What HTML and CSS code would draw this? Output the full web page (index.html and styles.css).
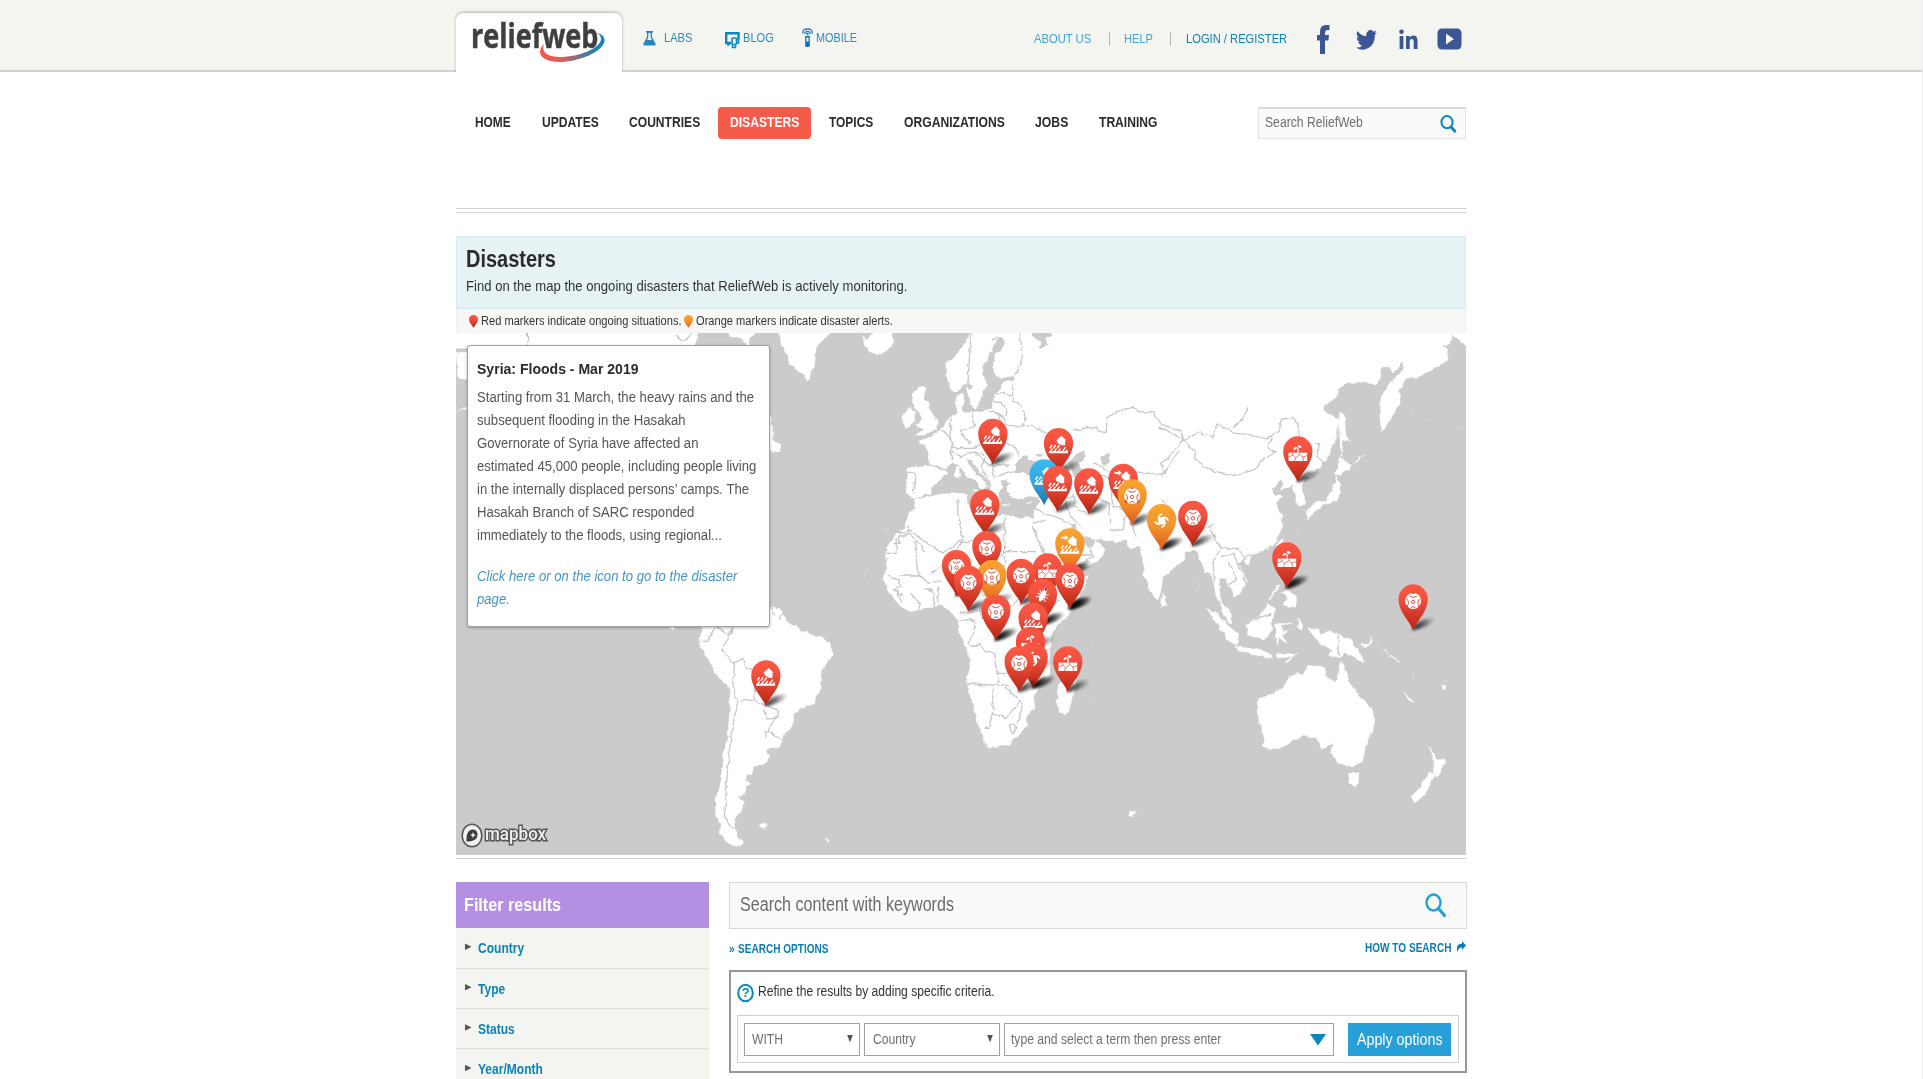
FILE: index.html
```html
<!DOCTYPE html>
<html lang="en">
<head>
<meta charset="utf-8">
<title>Disasters | ReliefWeb</title>
<link rel="stylesheet" href="styles.css">
</head>
<body>
<header class="top">
  <div class="wrap top-row">
    <a class="logo">
      <span class="logo-text t">reliefweb</span>
      <svg class="logo-swoosh" viewBox="0 0 68 32" width="68" height="32">
        <defs><linearGradient id="swoosh"><stop offset="0" stop-color="#f2594a"/><stop offset=".35" stop-color="#d9605c"/><stop offset=".75" stop-color="#3f79a8"/><stop offset="1" stop-color="#0988bf"/></linearGradient></defs>
        <path fill="url(#swoosh)" d="M6 12C3 20 9 25 22 25C41 25 63 16 63 7C63 4 61 2 59 1C64 2 67 5 66.500 9C65 20 40 30 22 30C6 30-4 22 6 12Z"/>
      </svg>
    </a>
    <nav class="tools">
      <a class="tool labs"><svg width="13" height="15" viewBox="0 0 13 15"><path fill="#2a86b8" d="M3 0h7v1.500H9v4.500l3.500 6.500q.8 2-1.500 2H2q-2.300 0-1.500-2L4 6V1.500H3zM5.300 2v4.500L4 9h5L7.700 6.500V2z"/></svg><span class="t">LABS</span></a>
      <a class="tool blog"><svg width="15" height="17" viewBox="0 0 15 17"><path fill="none" stroke="#0988bf" stroke-width="2.400" d="M6 11H3.500v2.500L3 11H1.200V1.200h12.300v7"/><rect x="7" y="6" width="4.500" height="6.500" rx="1.200" fill="#f4f4f0" stroke="#0988bf" stroke-width="1.600"/><path fill="none" stroke="#0988bf" stroke-width="1.500" d="M13.500 8v3H12M7.500 12.500v3h3v-3"/></svg><span class="t">BLOG</span></a>
      <a class="tool mobile"><svg width="11" height="19" viewBox="0 0 11 19"><path fill="none" stroke="#2a7fc0" stroke-width="1.400" d="M1 5.500Q0 1 5.500 1T10 5.500M3 6Q2.500 3.500 5.500 3.500T8 6"/><path fill="#0b6cb8" d="M3.200 8h4.600v10q0 1-2.300 1t-2.300-1z"/><path fill="#f4f4f0" d="M4.400 9.500h2.200v4H4.400z"/><circle cx="5.500" cy="6" r="1.200" fill="#2a7fc0"/></svg><span class="t">MOBILE</span></a>
    </nav>
    <nav class="user">
      <a class="u about"><span class="t">ABOUT US</span></a>
      <a class="u help"><span class="t">HELP</span></a>
      <a class="u login"><span class="t">LOGIN / REGISTER</span></a>
    </nav>
    <div class="social">
      <svg width="13" height="29" viewBox="0 0 13 29"><path fill="#3b5595" d="M3 29V15.500H0V10h3V7q0-7 6-7h3.500v5H10Q8 5 8 7.500V10h4l-.6 5.500H8V29z"/></svg>
      <svg width="21" height="20" viewBox="0 0 24 20" preserveAspectRatio="none"><path fill="#3b5595" d="M24 2.400a10 10 0 0 1-2.800.8A5 5 0 0 0 23.300.500a10 10 0 0 1-3.100 1.200A4.900 4.900 0 0 0 11.800 6.200 14 14 0 0 1 1.700 1a4.900 4.900 0 0 0 1.500 6.600 4.900 4.900 0 0 1-2.200-.6 4.900 4.900 0 0 0 3.900 4.900 5 5 0 0 1-2.200.1 4.900 4.900 0 0 0 4.600 3.400A9.900 9.900 0 0 1 0 17.500 14 14 0 0 0 21.500 5z"/></svg>
      <svg width="19" height="20" viewBox="0 0 19 20"><path fill="#3b5595" d="M.6 7h3.800v13H.6zM7 7h3.600v1.800Q12 6.600 14.400 6.600 18.500 6.600 18.500 12v8h-3.800v-7.200q0-2.800-2-2.800-2 0-2 2.800V20H7z"/><circle cx="2.500" cy="2.800" r="2.300" fill="#3b5595"/></svg>
      <svg width="25" height="22" viewBox="0 0 25 22"><rect x=".5" y=".5" width="24" height="21" rx="4.500" fill="#3b5595"/><path fill="#f4f4f0" d="M9 5.500v11l8-5.500z"/></svg>
    </div>
  </div>
</header>

<div class="wrap">
  <div class="mainbar">
    <nav class="menu">
      <a class="n1"><span class="t">HOME</span></a><a class="n2"><span class="t">UPDATES</span></a><a class="n3"><span class="t">COUNTRIES</span></a><a class="n4 active"><span class="t">DISASTERS</span></a><a class="n5"><span class="t">TOPICS</span></a><a class="n6"><span class="t">ORGANIZATIONS</span></a><a class="n7"><span class="t">JOBS</span></a><a class="n8"><span class="t">TRAINING</span></a>
    </nav>
    <div class="site-search"><span class="t">Search ReliefWeb</span><svg width="17" height="18" viewBox="0 0 17 18"><ellipse cx="7" cy="7.200" rx="5.600" ry="6.100" fill="none" stroke="#0988bf" stroke-width="2"/><path stroke="#0988bf" stroke-width="2.800" stroke-linecap="round" d="M11.300 12.300l3.600 3.900"/></svg></div>
  </div>
  <div class="rule"></div>

  <section class="banner">
    <h1><span class="t">Disasters</span></h1>
    <p><span class="t">Find on the map the ongoing disasters that ReliefWeb is actively monitoring.</span></p>
  </section>
  <div class="legend">
    <svg width="9" height="13" viewBox="-44 0 88 138" preserveAspectRatio="none"><use href="#drop" fill="url(#red)"/></svg><span class="t l1">Red markers indicate ongoing situations.</span>
    <svg width="9" height="13" viewBox="-44 0 88 138" preserveAspectRatio="none"><use href="#drop" fill="url(#orange)"/></svg><span class="t l2">Orange markers indicate disaster alerts.</span>
  </div>

  <div class="map">
    <svg class="world" width="1010" height="522" viewBox="456.500 333 1010 522">
      <defs>
        <linearGradient id="red" x2="0" y2="1"><stop offset="0" stop-color="#fb5845"/><stop offset=".3" stop-color="#f25240"/><stop offset=".7" stop-color="#d13624"/><stop offset="1" stop-color="#b32412"/></linearGradient>
        <linearGradient id="orange" x2="0" y2="1"><stop offset="0" stop-color="#fba531"/><stop offset=".5" stop-color="#f2922c"/><stop offset="1" stop-color="#e0581a"/></linearGradient>
        <linearGradient id="blue" x2="0" y2="1"><stop offset="0" stop-color="#3dbbf0"/><stop offset=".5" stop-color="#35a5dc"/><stop offset="1" stop-color="#1576b0"/></linearGradient>
        <linearGradient id="fade"><stop offset="0" stop-color="#000" stop-opacity=".9"/><stop offset=".5" stop-color="#000" stop-opacity=".5"/><stop offset="1" stop-color="#000" stop-opacity="0"/></linearGradient>
        <filter id="rough" x="0" y="0" width="1" height="1"><feTurbulence type="fractalNoise" baseFrequency=".14" numOctaves="2" seed="4"/><feDisplacementMap in="SourceGraphic" scale="5" xChannelSelector="R" yChannelSelector="G"/></filter>
        <filter id="soft" x="-.3" y="-.5" width="1.600" height="2"><feGaussianBlur stdDeviation="5"/></filter>
        <path id="drop" d="M0 138C-9 112-44 84-44 45A44 45 0 0 1 44 45C44 84 9 112 0 138Z"/>
        <path id="shade" d="M-4 138C4 118 22 104 58 102Q76 104 54 118Q26 134-4 138Z" fill="url(#fade)" filter="url(#soft)"/>
        <g id="flood"><path fill="#fff" d="M-4 44V38h-4L9 23l14 14h-3v15H9zM-29 70h57v6h-57z"/><path stroke="#fff" stroke-width="4.500" d="M-26 61l7-10M-15 61l7-10M-4 61l7-10M-27 74l9-12M-15 74l9-12M-3 74l9-12M9 74l12-16M21 74l5-8"/></g>
        <g id="flash"><use href="#flood"/><path fill="#fff" d="M-26 25h12v-5l10 8-10 8v-5h-12z"/></g>
        <g id="bio"><circle cy="50" r="24" fill="#fff"/><g fill="none" stroke="#e0503f" stroke-width="3"><circle cy="53" r="5"/><path d="M-11 35Q0 44 11 35M-15 61Q-11 50-20 43M15 61Q11 50 20 43M-7 70Q0 62 7 70"/></g><path fill="#e0503f" d="M-6 25q6 8 12 0zM-25 66l10-5-1 13zM25 66l-10-5 1 13z"/></g>
        <g id="drought"><path fill="#fff" d="M-28 49h56v25h-56z"/><path fill="none" stroke="#e0503f" stroke-width="2.200" d="M-28 62l14-6 8 8 12-10 8 8 14-4M-14 56l-4-6M-6 64l-4 10M14 62l4 12M6 54l-3-5"/><path fill="none" stroke="#fff" stroke-width="3.500" d="M0 50q4-8-1-16"/><path fill="#fff" d="M-13 41q1-11 11-9l-3 7zM-1 29q7-7 13 3l-7 4z"/></g>
        <g id="cyclone"><circle cy="50" r="11" fill="#fff"/><path fill="none" stroke="#fff" stroke-width="5" d="M-9 45Q-10 34 2 30M4 41Q16 38 20 50M10 53Q12 65-1 70M-3 60Q-15 62-20 52"/></g>
        <g id="locust" transform="rotate(28 0 50)"><ellipse cy="50" rx="8" ry="19" fill="#fff"/><path stroke="#fff" stroke-width="2.800" d="M-16 38l32 24M-16 62l32-24M-17 50h34M-5 28l4 10 6-10"/></g>
      </defs>
      <g filter="url(#rough)">
      <rect x="456" y="333" width="1012" height="523" fill="#cbcbcb"/>
      <g class="land" transform="translate(860 330) scale(.33333)">
        <path d="M335 0L322 35 300 62 262 98 262 140 275 180 290 185 312 165 322 160 328 195 335 225 345 237 358 225 360 200 375 178 385 162 372 140 370 105 388 75 405 45 415 22 430 18 437 38 425 60 408 72 402 95 403 130 422 145 466 137 466 150 430 155 420 175 403 195 402 220 395 240 375 240 345 247 318 248 308 235 314 200 308 188 290 205 290 235 295 250 275 262 262 272 250 290 235 306 215 320 205 325 180 330 180 342 200 350 207 370 208 405 190 413 145 410 140 425 145 440 140 470 140 490 150 497 165 507 185 497 215 490 222 465 245 445 262 432 262 412 278 400 300 405 320 435 350 455 366 476 382 474 376 456 350 430 325 400 322 388 335 390 352 415 375 440 392 462 390 490 405 512 425 510 415 490 430 470 422 455 440 445 448 460 442 478 450 500 475 508 505 500 535 505 540 515 525 540 520 565 520 590 530 600 535 625 555 660 575 700 585 722 605 732 650 720 690 705 720 690 738 660 722 640 708 632 700 655 688 652 660 630 640 605 628 582 645 585 668 618 700 628 740 632 770 635 800 632 815 655 838 650 848 680 855 740 875 790 893 810 905 785 910 740 930 725 975 685 980 668 1005 660 1015 670 1025 695 1035 730 1055 730 1065 770 1070 800 1085 820 1090 850 1105 875 1117 880 1110 840 1085 815 1080 780 1080 745 1100 745 1105 770 1120 785 1122 803 1145 785 1162 760 1155 730 1138 700 1155 678 1175 672 1225 658 1245 640 1265 600 1268 560 1248 520 1272 497 1248 495 1236 475 1265 452 1275 465 1262 482 1300 463 1310 500 1315 528 1335 520 1335 495 1323 470 1340 440 1370 420 1400 390 1430 330 1440 265 1405 252 1390 238 1425 205 1445 170 1465 158 1520 155 1550 165 1562 145 1570 115 1590 110 1600 130 1635 93 1628 120 1590 160 1565 200 1560 240 1565 305 1582 290 1600 255 1625 215 1618 185 1640 145 1685 140 1730 110 1765 92 1762 55 1748 48 1772 38 1778 10 1790 25 1822 48 1830 48V0H575L578 15 560 30 565 45 540 55 545 35 520 25V0Z"/>
        <path d="M163 510L200 502 240 492 310 490 325 497 318 520 345 545 380 572 410 560 435 555 470 563 520 563 515 590 530 625 545 660 570 690 585 720 610 748 682 738 675 770 630 850 590 890 572 930 570 985 575 1030 540 1075 522 1100 527 1138 498 1160 502 1185 474 1220 445 1245 391 1256 377 1245 373 1220 356 1185 344 1130 320 1060 332 1010 326 960 297 910 300 870 270 845 250 825 225 830 180 840 155 848 120 825 90 790 70 745 80 720 78 670 100 620 140 590 140 560 170 530ZM600 1062L592 1110 600 1143 612 1152 628 1145 636 1110 647 1070 650 1010 640 1020 625 1045Z"/>
        <path d="M178 170L200 175 192 200 210 230 220 260 234 275 228 300 170 320 190 300 172 285 190 265 172 240 158 215 163 185ZM150 235L166 245 165 280 135 297 130 260ZM10 15L20 30 40 9 95 9 103 35 85 65 55 75 30 65 14 45ZM288 410h14v20l-5 15-10-5zM365 478l-25-2 18 14zM425 522l28 3-25 2zM500 520l18-5-10 10zM908 790l14 35-16 5zM240 465l15-8"/>
        <path d="M1440 250L1455 250 1458 310 1470 335 1450 330 1447 380 1441 340ZM1440 385L1475 405 1470 418 1445 435 1425 437 1435 405ZM1430 440L1444 460 1436 512 1400 523 1370 540 1345 570 1340 545 1365 515 1398 515 1420 480ZM1475 402l40-28-20 20zM1265 632l6 4-10 18-8-10zM1155 680L1175 678 1168 705 1155 700ZM1265 785L1285 780 1310 800 1305 832 1270 825 1285 810ZM1228 810l26-45 4 3-27 42zM1158 880L1200 860 1225 822 1247 835 1240 865 1235 905 1210 930 1165 915ZM1042 835L1065 845 1100 880 1137 915 1135 945 1115 940 1080 895ZM1130 948L1190 955 1230 970 1240 985 1170 972 1135 962ZM1250 973h62l-10 8-50 3zM1275 997l22-15-8 12zM1248 885L1300 878 1268 890 1268 905 1282 900 1272 915 1282 942 1260 920 1255 943 1247 920ZM1320 865l8 15-6 22-5-10zM1343 893L1375 900 1380 915 1410 905 1440 915 1475 930 1490 955 1510 985 1515 998 1475 975 1450 965 1445 983 1405 975 1415 960 1380 940 1360 915ZM1500 945l30-5 5-22 3 20-18 15zM1555 945l64 50-5 1-30-28zM1660 1035l6 18M1633 1090l28 24v4l-22-17zM1746 1065h12v10h-12zM1655 232l4 10M1748 1056l23-6"/>
        <path d="M1200 1110L1270 1075 1280 1050 1310 1030 1330 1035 1345 1005 1400 1015 1392 1035 1430 1062 1440 1020 1446 996 1460 1030 1475 1070 1510 1105 1540 1145 1544 1185 1518 1250 1509 1295 1482 1308 1435 1300 1417 1270 1422 1235 1388 1255 1370 1225 1340 1216 1293 1235 1281 1247 1228 1260 1210 1245 1216 1230 1198 1170 1194 1140Z"/>
        <path d="M1706 270l5 4M1748 290l4 3M1798 290l4 3M1320 600l-5 18M1336 570l-3 8M1020 755l-3 20M78 598l6 4M1092 642M692 936l6 4M20 728l-6 10"/>
        <g class="water">
          <path d="M468 430L470 400 490 380 505 378 505 390 530 395 560 420 590 440 540 445 500 432ZM525 375l30-8-10 14zM650 372L678 360 678 380 658 395 662 420 682 440 688 485 665 500 650 470 640 430 628 400ZM722 382L748 368 750 398 730 408ZM1162 226L1168 240 1150 270 1130 292 1114 292 1140 275 1158 250ZM322 165l18 0-8 15zM430 460l28-2-14 6z"/>
        </g>
        <g class="lines">
          <path d="M335 9L330 80 325 165M412 20L400 30M480 9L492 85 465 137M458 155L460 215 485 225 500 265 492 285M410 190l50 5M403 215l25 3 15 30-5 10M340 245l5 45-45 15 35 35M385 248l30-2 30 40 75 3 60 30M415 248l10 35-5 30M275 262l-3 55 10 38h60l50-20M250 297l30 40-8 30 10 25M208 400l55 25M145 430h22l-5 60M275 365l30 15 40-15 30 10M345 365l40 40 60 0M395 400l10 40 60-15M380 380l-15 30 30 60M420 340l45 5 12 35"/>
          <path d="M640 300L690 292 740 305 745 260 775 245 820 232 840 245 880 248 915 290 960 300 975 330 955 350 930 380 905 400 915 430 870 430 820 425M700 395l40 25 60 30M700 440l50 0 60 40M690 490l60 30v60M750 440l10 90 50 10M640 490l5 40 35 20M535 505l70-5 40 0M620 500l0 40 40 50M525 535l30 15 50 20 30 15M520 580l40-10M750 600h40l10-60 40 5M830 620l-20-60 30-40M690 655l10 25-40 30M590 680l60-5 50 0"/>
          <path d="M900 290L925 305 975 330 1015 308 1060 320 1075 285 1130 310 1180 315 1220 330 1260 300 1265 268 1300 262 1315 285 1320 320M975 330l30 35 5 25 45 32 70 15 60-18 30-35 35-15-25-15 10-30M1320 400l35 30M1370 345l10-5-10 40 25 20M960 360l-25 35-30 45M905 510l60 70 50 20 50-15M1010 640l-20-30M1050 590l20 45 15 20 60 0M1085 660l-25 35 5 60M1085 680l35-10 30 60 15 50M1110 700l20 50-25 20M1160 880l75-30M1436 915v60M1130 655l30 30"/>
          <path d="M102 608h46v-25M102 640h18v-25h30M80 670h30v-45M150 600l100 72 60-45-15-75 0-45M165 635l10 100h-55M145 605l55 60M300 640l45-10 90 50M435 560v105h95M435 665l0 60M370 700l-20-50M310 630l-35 60-60 40M125 735l50 0 35 25 40-10M80 740l35 8 10 22-25 10 30 15M115 790l10 25M155 790l25 30v20M195 780l25 0 5 50M235 770l0 55M250 730l80 20 50 50-20 40 10 30M300 850l60-5 90-10 40-40M300 870h45v40l-20 30M330 945h35l10 20h30l10 60v35M320 1062l130 5M400 1070v70l-10 55h-15M400 1150l40 15 40-50M435 1070l55 50-15 60M410 1030h40l30 20M450 1185l12-5 8 15-12 15zM490 850l70-10 40-30M570 960l-45-5M545 845l0 60"/>
        </g>
      </g>
      <g class="land" transform="translate(440 620) scale(.33333)">
        <path d="M790 0L990-40 1020-35 1045 5 1060 15 1110 45 1140 48 1175 72 1178 108 1145 152 1142 210 1125 250 1085 265 1062 285 1062 312 1035 345 1020 382 978 385 992 402 985 430 945 440 940 468 920 465 920 480 930 488 915 520 900 530 912 550 905 575 885 600 885 625 900 655 918 668 890 682 860 665 842 640 845 615 828 590 828 540 845 480 850 400 865 350 870 280 873 205 830 165 800 110 780 75 785 30ZM955 618l10-10 18 5-10 12zM1155 655l12 4 3 10zM690 22l20 2-10 6z"/>
        <path class="lines" d="M785 60l15 5 30-45 45 25 3-30M875 30l-25 60 25 30 5 10 30-15 15 30 20 5M885 130l-5 60 12 55 45-5 20 8 55 20 5 25-35 5-10-30M895 245L875 340 862 480 855 590 880 625M1015 285l-35 50v25M985 330l40 30M945 240l5-40M990-40l15 25M1035-20l-20 15"/>
      </g>
      <g class="land" transform="translate(440 220) scale(.33333)">
        <path d="M0 330H780L760 385 0 385ZM862 330H948L925 375 905 355 870 345ZM1015 330H1180L1130 380 1125 440 1105 480 1080 458 1050 430 1035 390ZM990 585L1000 620 998 655 1025 680 1020 698 985 688ZM50 400L90 400V480L55 475ZM50 575l30-18v10zM1465 465l6 8M1335 925l12 8M1272 1065l10-8"/>
        <path class="lines" d="M264 330v50M710 345l20 20 25-25"/>
      </g>
      <g class="land" transform="translate(860 600) scale(.3953 .33333)">
        <path d="M1237 520L1263 520 1262 550 1250 560 1240 545ZM1440 440L1455 465 1463 482 1482 480 1475 505 1458 532 1450 522 1457 500 1450 470ZM1438 520L1452 520 1450 540 1428 585 1405 605 1394 592 1420 560ZM684 632l14 4-4 10-10 2zM586 290l6 6M600 284l4 4"/>
      </g>
      </g>

      <g class="markers" transform="translate(860 330) scale(.33333)">
        <g transform="translate(400 266)"><use href="#shade"/><use href="#drop" fill="url(#red)"/><use href="#flood"/></g>
        <g transform="translate(597 294)"><use href="#shade"/><use href="#drop" fill="url(#red)"/><use href="#flood"/></g>
        <g transform="translate(1315 319)"><use href="#shade"/><use href="#drop" fill="url(#red)"/><use href="#drought"/></g>
        <g transform="translate(554 388)"><use href="#drop" fill="url(#blue)"/><use href="#flood"/></g>
        <g transform="translate(791 401)"><use href="#shade"/><use href="#drop" fill="url(#red)"/><use href="#flash"/></g>
        <g transform="translate(594 408)"><use href="#shade"/><use href="#drop" fill="url(#red)"/><use href="#flood"/></g>
        <g transform="translate(688 415)"><use href="#shade"/><use href="#drop" fill="url(#red)"/><use href="#flood"/></g>
        <g transform="translate(818 448)"><use href="#shade"/><use href="#drop" fill="url(#orange)"/><use href="#bio"/></g>
        <g transform="translate(376 478)"><use href="#shade"/><use href="#drop" fill="url(#red)"/><use href="#flood"/></g>
        <g transform="translate(1000 512)"><use href="#shade"/><use href="#drop" fill="url(#red)"/><use href="#bio"/></g>
        <g transform="translate(906 522)"><use href="#shade"/><use href="#shade"/><use href="#drop" fill="url(#orange)"/><use href="#cyclone"/></g>
        <g transform="translate(631 595)"><use href="#shade"/><use href="#shade"/><use href="#drop" fill="url(#orange)"/><use href="#flash"/></g>
        <g transform="translate(382 603)"><use href="#drop" fill="url(#red)"/><use href="#bio"/></g>
        <g transform="translate(1282 637)"><use href="#shade"/><use href="#shade"/><use href="#drop" fill="url(#red)"/><use href="#drought"/></g>
        <g transform="translate(291 660)"><use href="#shade"/><use href="#shade"/><use href="#drop" fill="url(#red)"/><use href="#bio"/></g>
        <g transform="translate(564 670)"><use href="#drop" fill="url(#red)"/><use href="#drought"/></g>
        <g transform="translate(485 686)"><use href="#shade"/><use href="#drop" fill="url(#red)"/><use href="#bio"/></g>
        <g transform="translate(397 690)"><use href="#shade"/><use href="#drop" fill="url(#orange)"/><use href="#bio"/></g>
        <g transform="translate(631 700)"><use href="#shade"/><use href="#shade"/><use href="#shade"/><use href="#drop" fill="url(#red)"/><use href="#bio"/></g>
        <g transform="translate(327 707)"><use href="#shade"/><use href="#drop" fill="url(#red)"/><use href="#bio"/></g>
        <g transform="translate(549 747)"><use href="#shade"/><use href="#shade"/><use href="#drop" fill="url(#red)"/><use href="#locust"/></g>
        <g transform="translate(1661 763)"><use href="#shade"/><use href="#drop" fill="url(#red)"/><use href="#bio"/></g>
        <g transform="translate(409 794)"><use href="#shade"/><use href="#shade"/><use href="#drop" fill="url(#red)"/><use href="#bio"/></g>
        <g transform="translate(521 818)"><use href="#shade"/><use href="#drop" fill="url(#red)"/><use href="#flood"/></g>
        <g transform="translate(513 890)"><use href="#shade"/><use href="#drop" fill="url(#red)"/><use href="#drought"/></g>
        <g transform="translate(521 937)"><use href="#shade"/><use href="#shade"/><use href="#drop" fill="url(#red)"/><use href="#cyclone"/></g>
        <g transform="translate(479 949)"><use href="#shade"/><use href="#drop" fill="url(#red)"/><use href="#bio"/></g>
        <g transform="translate(625 949)"><use href="#shade"/><use href="#drop" fill="url(#red)"/><use href="#drought"/></g>
        <g transform="translate(-281 991)"><use href="#shade"/><use href="#drop" fill="url(#red)"/><use href="#flood"/></g>
      </g>
    </svg>
    <article class="popup">
      <h2><span class="t">Syria: Floods - Mar 2019</span></h2>
      <p class="t">Starting from 31 March, the heavy rains and the<br>subsequent flooding in the Hasakah<br>Governorate of Syria have affected an<br>estimated 45,000 people, including people living<br>in the internally displaced persons’ camps. The<br>Hasakah Branch of SARC responded<br>immediately to the floods, using regional...</p>
      <p class="t more">Click here or on the icon to go to the disaster<br>page.</p>
    </article>
    <div class="mapbox">
      <svg width="22" height="25" viewBox="0 0 22 25"><ellipse cx="11" cy="12.500" rx="9.800" ry="11.300" fill="#f2f2f2" stroke="#555" stroke-width="1.500"/><path fill="#3c3c3c" d="M5.500 18.500Q5 6.500 12 6.500Q17 7 16.500 12.500Q16 18.500 5.500 18.500Z"/><path fill="#f2f2f2" d="M12 9l.8 2.300 2.200.8-2.200.8-.8 2.300-.8-2.300-2.200-.8 2.200-.8z"/></svg>
      <span class="t">mapbox</span>
    </div>
  </div>
  <div class="rule single"></div>

  <div class="columns">
    <aside class="filters">
      <h3><span class="t">Filter results</span></h3>
      <ul>
        <li><i></i><span class="t">Country</span></li>
        <li><i></i><span class="t">Type</span></li>
        <li><i></i><span class="t">Status</span></li>
        <li><i></i><span class="t">Year/Month</span></li>
      </ul>
    </aside>
    <main class="results">
      <div class="keyword"><span class="t">Search content with keywords</span><svg width="22" height="25" viewBox="0 0 22 25"><ellipse cx="8.500" cy="9.500" rx="7" ry="8" fill="none" stroke="#279fd9" stroke-width="2.400"/><path stroke="#279fd9" stroke-width="3.200" stroke-linecap="round" d="M13.800 15.800l5.700 6.700"/></svg></div>
      <div class="hints">
        <a><span class="raquo t">»</span><span class="t">SEARCH OPTIONS</span></a>
        <a class="how"><span class="t">HOW TO SEARCH</span><svg width="10" height="12" viewBox="0 0 10 12"><path fill="#0b7db2" d="M6 0l4 4.500-4 4.500V6.500Q2 6.500 1.500 11.500Q-1 3 6 2.800z"/></svg></a>
      </div>
      <form class="options">
        <div class="refine"><svg width="17" height="20" viewBox="0 0 17 20"><ellipse cx="8.500" cy="10" rx="7.300" ry="8.300" fill="#fff" stroke="#0988bf" stroke-width="2"/><text x="8.500" y="14.300" text-anchor="middle">?</text></svg><span class="t">Refine the results by adding specific criteria.</span></div>
        <div class="criteria">
          <div class="field with"><span class="t">WITH</span><i></i></div>
          <div class="field kind"><span class="t">Country</span><i></i></div>
          <div class="field term"><span class="t">type and select a term then press enter</span><i></i></div>
          <div class="apply"><span class="t">Apply options</span></div>
        </div>
      </form>
    </main>
  </div>
</div>
</body>
</html>
```
FILE: styles.css
```css
* { box-sizing: border-box; }
body {
  margin: 0;
  height: 1079px;
  overflow: hidden;
  background: #fff;
  color: #333;
  font: 15px "Liberation Sans", Arial, sans-serif;
  border-right: 1px solid #efefef;
}
h1, h2, h3, p, ul { margin: 0; padding: 0; font-size: inherit; font-weight: inherit; }
ul { list-style: none; }
svg { display: block; flex: none; }
.wrap { width: 1010px; margin: 0 0 0 456px; }

/* condensed text: each block sets its own ratio in --k */
.t {
  display: inline-block;
  white-space: nowrap;
  transform: scaleX(var(--k, .833));
  transform-origin: 0 50%;
}

/* top strip */
.top { height: 72px; background: #f4f4f0; border-bottom: 2px solid #d2d2cd; }
.top-row { display: flex; height: 72px; }
.logo {
  position: relative;
  width: 166px;
  height: 59px;
  margin-top: 13px;
  background: #fff;
  border-radius: 7px 7px 0 0;
  box-shadow: 0 -1px 3px rgba(0,0,0,.28);
  clip-path: inset(-5px -5px 0 -5px);
}
.logo-text {
  --k: .795;
  margin-left: 15px;
  color: #3f3f3f;
  font: 700 34px/44px "Open Sans", sans-serif;
  -webkit-text-stroke: .5px #3f3f3f;
}
.logo-swoosh { position: absolute; left: 82px; top: 19px; }
.tools, .user { display: flex; font-size: 13.3px; color: #2b8cc0; }
.tool { display: flex; line-height: 76px; height: 70px; }
.labs { margin-left: 21px; width: 82px; }
.labs svg { margin: 31px 7.5px 0 0; }
.blog { width: 77px; }
.blog svg { margin: 32px 2.5px 0 0; }
.mobile { width: 56px; }
.mobile svg { margin: 28px 3px 0 0; }
.mobile .t { --k: .816; }
.user { margin-left: 176px; line-height: 78px; color: #45a5d8; }
.u { position: relative; }
.about { width: 90px; --k: .845; }
.help { width: 62.3px; }
.login { width: 101px; color: #0b83b8; --k: .84; }
.about::after, .help::after {
  content: "";
  position: absolute;
  top: 32px;
  width: 1px;
  height: 14px;
  background: #b5b5b2;
}
.about::after { left: 75px; }
.help::after { left: 46px; }
.social { display: flex; align-items: flex-start; margin-left: 30.2px; }
.social svg:nth-child(1) { margin-top: 24.5px; }
.social svg:nth-child(2) { margin: 29.5px 0 0 25.5px; }
.social svg:nth-child(3) { margin: 28.5px 0 0 22.5px; }
.social svg:nth-child(4) { margin: 27.5px 0 0 19px; }

/* main menu */
.mainbar { display: flex; justify-content: space-between; height: 32px; margin-top: 35px; }
.menu { display: flex; color: #2b2b2b; font-weight: 700; font-size: 14.4px; line-height: 31px; --k: .84; }
.menu a { height: 32px; }
.n1 { width: 67px; margin-left: 18.5px; --k: .825; }
.n2 { width: 87.2px; }
.n3 { width: 89.3px; }
.n4 { width: 93px; padding-left: 12px; --k: .842; }
.n5 { width: 74.7px; margin-left: 18.5px; --k: .83; }
.n6 { width: 131px; --k: .843; }
.n7 { width: 63.7px; --k: .85; }
.active { background: #f45b49; color: #fff; border-radius: 4px; }
.site-search {
  display: flex;
  justify-content: space-between;
  width: 208.5px;
  height: 32px;
  padding: 0 8px 0 6px;
  border: 1px solid #e2e2df;
  border-top: 2px solid #dadad7;
  background: #fafaf9;
  color: #6f6f6f;
  font-size: 14.4px;
  line-height: 27px;
}
.site-search .t { --k: .846; }
.site-search svg { margin-top: 5.5px; }
.rule { height: 5px; margin-top: 69px; border: solid #d2d2d2; border-width: 1px 0; }
.rule.single { height: 4px; margin: 0; border-width: 0 0 1px; }

/* heading and legend */
.banner {
  height: 73px;
  margin-top: 23px;
  padding: 6.600px 9px 0;
  background: #e6f2f3;
  border: 1px solid #d3e9ee;
}
.banner h1 { --k: .85; font-weight: 700; font-size: 23.5px; line-height: 30px; color: #2b2b2b; }
.banner p { --k: .874; line-height: 23px; }
.legend {
  display: flex;
  height: 24px;
  padding-left: 11.5px;
  background: #f7f7f6;
  border: solid #eeeeec;
  border-width: 0 1px;
  font-size: 12px;
  line-height: 25px;
  --k: .925;
}
.legend svg { margin-top: 6px; }
.l1 { width: 203px; margin-left: 3px; }
.l2 { margin-left: 3px; }

/* map */
.map { position: relative; height: 522px; background: #cbcbcb; }
.land { fill: #fff; stroke: #fff; stroke-width: 1; }
.water { fill: #cbcbcb; stroke: none; }
.lines { fill: none; stroke: #c6c6c6; stroke-width: 3.8; }
.popup {
  position: absolute;
  left: 10.5px;
  top: 12px;
  width: 303px;
  height: 282px;
  padding: 13px 9.8px;
  background: #fff;
  border: 1.5px solid #a0a0a0;
  border-radius: 3px;
  box-shadow: 0 1px 3px rgba(0,0,0,.3);
  color: #555;
  font-size: 14.9px;
  line-height: 23.15px;
  --k: .881;
}
.popup h2 { height: 26.500px; line-height: 20px; font-size: 15px; font-weight: 700; color: #2b2b2b; --k: .936; }
.popup p { display: block; }
.popup .more { margin-top: 17.5px; line-height: 22.4px; color: #4593c8; font-style: italic; }
.mapbox { position: absolute; left: 5px; top: 490px; display: flex; }
.mapbox .t {
  --k: .92;
  margin-left: 1.5px;
  color: #efefef;
  font: 500 18.5px/23px Roboto, sans-serif;
  -webkit-text-stroke: 3px #555;
  paint-order: stroke fill;
}

/* lower columns */
.columns { display: grid; grid-template-columns: 253px 737.5px; gap: 20px; margin-top: 23px; }
.filters h3 {
  height: 46.300px;
  padding-left: 8px;
  background: #b390e2;
  color: #fff;
  font-weight: 700;
  font-size: 19px;
  line-height: 46px;
  --k: .851;
}
.filters li {
  display: flex;
  height: 40.4px;
  background: #f4f4f0;
  border-bottom: 1px solid #dfdfdb;
  color: #0b83b8;
  font-weight: 700;
  font-size: 14.9px;
  line-height: 40px;
  --k: .808;
}
.filters i { width: 21.5px; padding-left: 8.5px; }
.filters i::before {
  content: "";
  display: block;
  width: 7px;
  height: 7px;
  margin-top: 15px;
  background: #555;
  clip-path: polygon(0 0, 100% 50%, 0 100%);
}
.keyword {
  display: flex;
  justify-content: space-between;
  height: 47px;
  padding: 0 18.5px 0 10px;
  background: #f9f9f8;
  border: 1px solid #d8d8d5;
  color: #6b6b6b;
  font-size: 19.5px;
  line-height: 43px;
  --k: .826;
}
.keyword svg { margin-top: 10px; }
.hints {
  display: flex;
  justify-content: space-between;
  height: 41px;
  color: #0b7db2;
  font-weight: 700;
  font-size: 12px;
  line-height: 40px;
  --k: .838;
}
.hints a { display: flex; }
.raquo { width: 9px; }
.how { width: 102px; line-height: 38px; justify-content: space-between; }
.how .t { width: 86px; }
.how svg { margin: 11.5px .5px 0 0; }
.options { height: 103px; padding: 0 5.5px; border: 2px solid #979797; }
.refine { display: flex; height: 42.5px; line-height: 38px; font-size: 14.7px; --k: .823; }
.refine svg { margin: 11px 4px 0 0; }
.refine text { font: 700 13px "Liberation Sans", sans-serif; fill: #0988bf; }
.criteria {
  display: flex;
  height: 48.5px;
  padding: 7px 7px 0 6px;
  border: 1px solid #d0d0d0;
}
.field {
  display: flex;
  justify-content: space-between;
  height: 33px;
  padding-left: 7px;
  border: 1px solid #a2a2a2;
  color: #707070;
  font-size: 14.7px;
  line-height: 31px;
  --k: .826;
}
.with { width: 116.5px; margin-right: 3.5px; }
.kind { width: 136.5px; margin-right: 4px; padding-left: 8px; }
.term { width: 330px; margin-right: 14px; padding-left: 5.5px; }
.field i { width: 6px; height: 8px; margin: 11px 6px 0 0; background: #555; clip-path: polygon(0 0, 100% 0, 50% 100%); }
.term i { width: 16px; height: 11.5px; margin: 10.5px 7px 0 0; background: #0988bf; }
.apply { width: 103px; height: 33px; padding-left: 8.5px; background: #279fd9; color: #fff; font-size: 16px; line-height: 33px; --k: .89; }
```
